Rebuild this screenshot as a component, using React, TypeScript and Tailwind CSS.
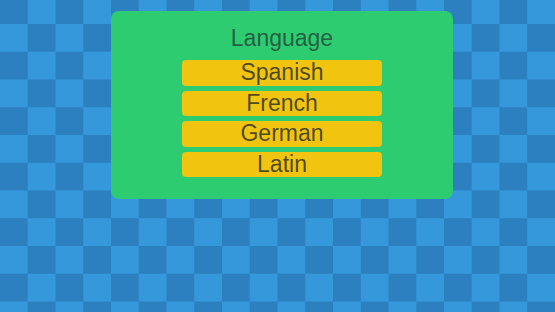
export default function App() {
  const langs = ["Spanish", "French", "German", "Latin"];
  return (
    <div className="h-[312px] w-full overflow-hidden pt-[11px] bg-[conic-gradient(#3498db_25%,#2d80c0_0_50%,#3498db_0_75%,#2d80c0_0)] bg-[length:55.5px_55.5px] bg-[position:0_-3.75px] font-['Liberation_Sans',Arial,sans-serif]">
      <div className="ml-[111px] w-[342px] h-[188px] rounded-[8px] bg-[#2ecc71] pt-[14px] flex flex-col items-center">
        <div className="text-[23px] leading-[26px] text-[rgba(30,40,40,0.68)]">Language</div>
        <div className="mt-[9px] flex flex-col gap-[5px]">
          {langs.map((l) => (
            <div
              key={l}
              className="w-[200px] h-[25.5px] rounded-[4px] bg-[#f1c40f] text-center text-[23px] leading-[25.5px] text-[rgba(30,40,40,0.78)]"
            >
              {l}
            </div>
          ))}
        </div>
      </div>
    </div>
  );
}
